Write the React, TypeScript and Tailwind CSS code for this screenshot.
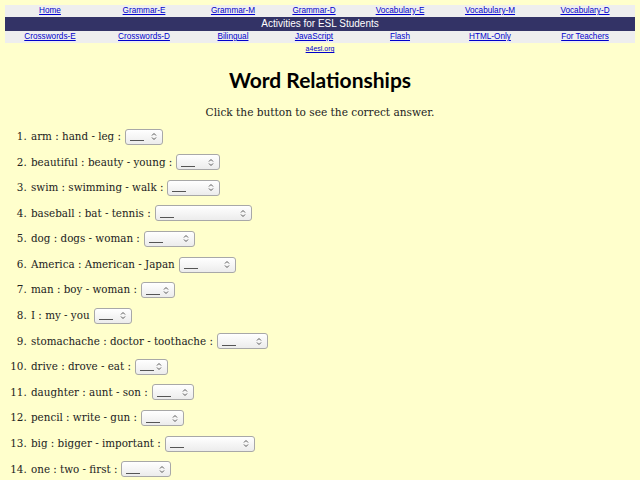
import React from "react";

const top = ["Home", "Grammar-E", "Grammar-M", "Grammar-D", "Vocabulary-E", "Vocabulary-M", "Vocabulary-D"];
const bottom = ["Crosswords-E", "Crosswords-D", "Bilingual", "JavaScript", "Flash", "HTML-Only", "For Teachers"];

const items: [string, number][] = [
  ["arm : hand - leg :", 38],
  ["beautiful : beauty - young :", 44],
  ["swim : swimming - walk :", 53],
  ["baseball : bat - tennis :", 97],
  ["dog : dogs - woman :", 51],
  ["America : American - Japan", 57],
  ["man : boy - woman :", 34],
  ["I : my - you", 38],
  ["stomachache : doctor - toothache :", 51],
  ["drive : drove - eat :", 33],
  ["daughter : aunt - son :", 42],
  ["pencil : write - gun :", 43],
  ["big : bigger - important :", 90],
  ["one : two - first :", 50],
];

function Sel({ w }: { w: number }) {
  return (
    <span
      className="inline-flex items-center justify-between align-middle h-[16px] rounded-[3px] border border-[#a8a8a8] bg-gradient-to-b from-white to-[#ececec] pl-[4px] pr-[5px] ml-[4px]"
      style={{ width: w }}
    >
      <span className="block w-[14px] h-[1px] bg-[#555] mt-[8px]" />
      <svg width="6" height="9" viewBox="0 0 6 9" className="block">
        <path d="M1 3.5 L3 1.5 L5 3.5 M1 5.5 L3 7.5 L5 5.5" fill="none" stroke="#555" strokeWidth="1" />
      </svg>
    </span>
  );
}

export default function App() {
  return (
    <div className="min-h-[480px] bg-[#ffffcc] pt-[5px] px-[5px]" style={{ fontFamily: '"DejaVu Serif Condensed", "DejaVu Serif", serif' }}>
      <div
        className="grid grid-cols-[90px_98px_80px_82px_90px_90px_100px]"
        style={{ fontFamily: '"Liberation Sans", Arial, sans-serif' }}
      >
        {top.map((t) => (
          <div key={t} className="bg-[#eeeeee] h-[12px] flex items-center justify-center text-[8.2px] leading-none">
            <a href="#" className="text-[#0000cc] underline">{t}</a>
          </div>
        ))}
        <div className="col-span-7 bg-[#333366] text-white text-[10px] leading-none h-[14px] flex items-center justify-center">
          Activities for ESL Students
        </div>
        {bottom.map((t) => (
          <div key={t} className="bg-[#eeeeee] h-[12px] flex items-center justify-center text-[8.2px] leading-none">
            <a href="#" className="text-[#0000cc] underline">{t}</a>
          </div>
        ))}
        <div className="col-span-7 flex justify-center text-[7px] leading-none mt-[2px]">
          <a href="#" className="text-[#0000cc] underline">a4esl.org</a>
        </div>
      </div>
      <h1
        className="text-center text-[21px] font-bold text-black mt-[17px] leading-none"
        style={{ fontFamily: '"Comic Sans MS", Lato, sans-serif' }}
      >
        Word Relationships
      </h1>
      <p className="text-center text-[11.75px] text-[#222] mt-[17px] leading-none">Click the button to see the correct answer.</p>
      <ol className="list-decimal pl-[25px] mt-[5px] text-[11.5px] text-[#222]">
        {items.map(([t, w], i) => (
          <li key={i} className="h-[25.6px]">
            <span className="inline-flex items-center h-[25.6px]">
              <span className="pl-[1px]">{t}</span>
              <Sel w={w} />
            </span>
          </li>
        ))}
      </ol>
    </div>
  );
}
